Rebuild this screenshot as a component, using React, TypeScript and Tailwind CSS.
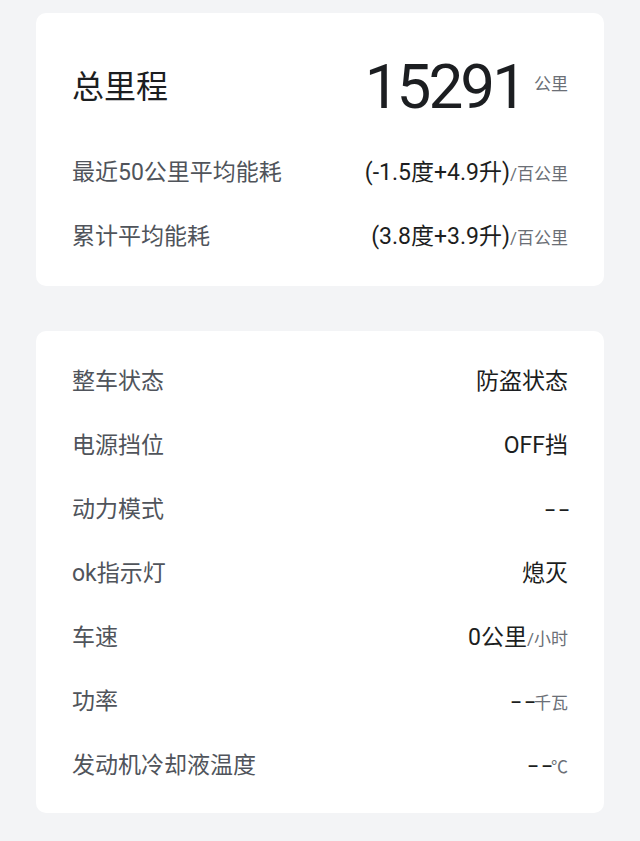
import type { ReactNode } from "react";

const FONT = "font-['Roboto','Noto_Sans_CJK_SC',sans-serif]";

type Row = {
	label: string;
	value: string;
	unit?: string;
};

const ENERGY_ROWS: Row[] = [
	{ label: "最近50公里平均能耗", value: "(-1.5度+4.9升)", unit: "/百公里" },
	{ label: "累计平均能耗", value: "(3.8度+3.9升)", unit: "/百公里" },
];

const STATUS_ROWS: Row[] = [
	{ label: "整车状态", value: "防盗状态" },
	{ label: "电源挡位", value: "OFF挡" },
	{ label: "动力模式", value: "--" },
	{ label: "ok指示灯", value: "熄灭" },
	{ label: "车速", value: "0公里", unit: "/小时" },
	{ label: "功率", value: "--", unit: "千瓦" },
	{ label: "发动机冷却液温度", value: "--", unit: "℃" },
];

// the "--" placeholder is drawn with longer dashes and wider gaps than plain hyphens
function Value({ text }: { text: string }) {
	if (text === "--") {
		return (
			<span className="text-[23px] text-[#1c1e21]">
				<span className="inline-block scale-x-[1.6] mr-[7px]">-</span>
				<span className="inline-block scale-x-[1.6] mr-[1px]">-</span>
			</span>
		);
	}
	return <span className="text-[23px] text-[#1c1e21]">{text}</span>;
}

function InfoRow({ row }: { row: Row }) {
	return (
		<div className="flex h-[64px] items-center justify-between">
			<span className="text-[23px] text-[#50545b]">{row.label}</span>
			<span className="flex items-baseline">
				<Value text={row.value} />
				{row.unit && <span className="text-[17px] text-[#6b6f76]">{row.unit}</span>}
			</span>
		</div>
	);
}

function Card({ children, className }: { children: ReactNode; className?: string }) {
	return <div className={`rounded-[10px] bg-white px-[36px] ${className ?? ""}`}>{children}</div>;
}

export default function App() {
	return (
		<div className={`min-h-[841px] bg-[#f3f4f6] px-[36px] pt-[13px] pb-[28px] ${FONT}`}>
			<Card className="pt-[39px] pb-[17px]">
				<div className="flex h-[70px] items-center justify-between">
					<span className="text-[32px] text-[#1c1e21]">总里程</span>
					<span className="flex items-start">
						<span className="text-[62px] leading-none tracking-[-3px] text-[#1c1e21]">15291</span>
						<span className="mt-[20px] ml-[10px] text-[17px] leading-none text-[#6b6f76]">公里</span>
					</span>
				</div>
				<div className="mt-[19px]">
					{ENERGY_ROWS.map((row) => (
						<InfoRow key={row.label} row={row} />
					))}
				</div>
			</Card>

			<Card className="mt-[45px] pt-[19px] pb-[15px]">
				{STATUS_ROWS.map((row) => (
					<InfoRow key={row.label} row={row} />
				))}
			</Card>
		</div>
	);
}
